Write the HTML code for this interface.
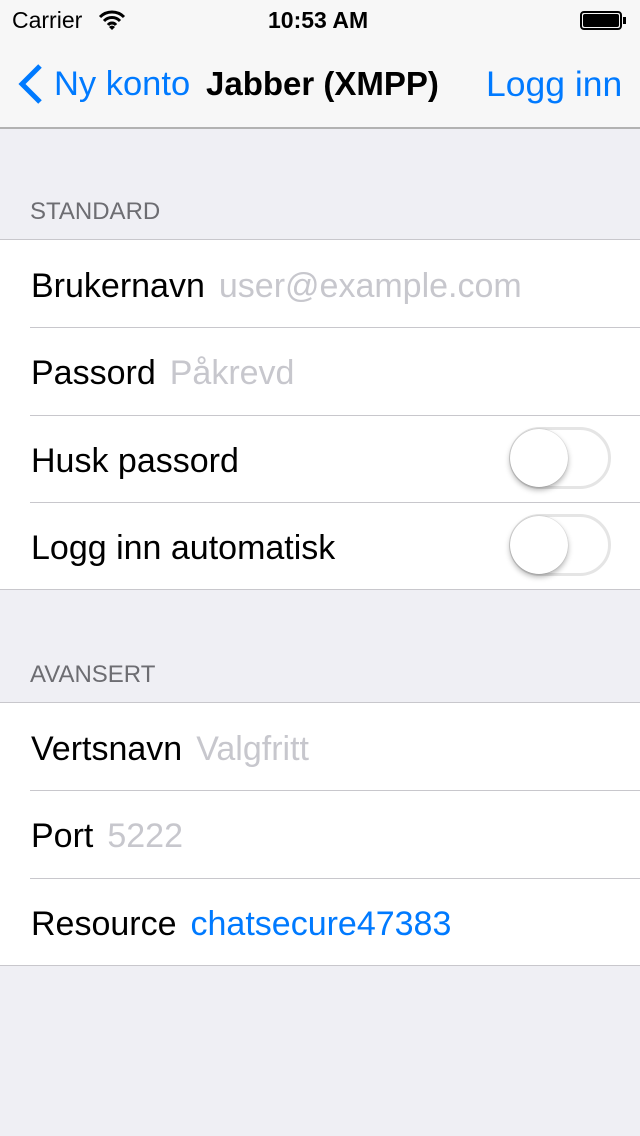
<!DOCTYPE html>
<html><head><meta charset="utf-8"><style>
*{margin:0;padding:0;box-sizing:border-box}
body{width:640px;height:1136px;background:#efeff4;font-family:"Liberation Sans",sans-serif;position:relative;overflow:hidden}
.nav{position:absolute;left:0;top:0;width:640px;height:129px;background:#f7f7f7;border-bottom:2px solid #b2b2b2}
.t{position:absolute;white-space:nowrap}
.hdr{position:absolute;left:30px;font-size:24px;color:#6d6d72}
.grp{position:absolute;left:0;width:640px;background:#fff;border-top:1px solid #c8c7cc;border-bottom:1px solid #c8c7cc}
.row{position:relative;height:87.3px;font-size:34px;line-height:92px;padding-left:31px;color:#000}
.row+.row::before{content:"";position:absolute;left:30px;right:0;top:0;border-top:1px solid #c8c7cc}
.ph{color:#c7c7cd;margin-left:14px}
.bl{color:#007aff;margin-left:14px}
.sw{position:absolute;left:509px;top:12px;width:102px;height:62px;border-radius:31px;border:3px solid #e5e5e5;background:#fff}
.kn{position:absolute;left:-2px;top:-1px;width:58px;height:58px;border-radius:50%;background:#fff;box-shadow:0 3px 6px rgba(0,0,0,.3),0 0 1px rgba(0,0,0,.3)}
</style></head><body>
<div class="nav">
<div class="t" style="left:12px;top:7px;font-size:23px">Carrier</div>
<svg class="t" style="left:98px;top:10px" width="28" height="20" viewBox="0 0 28 20"><path d="M2 7a17 17 0 0 1 24 0M6 11a11 11 0 0 1 16 0M10 15a5 5 0 0 1 8 0" stroke="#000" stroke-width="3" fill="none"/><path d="M14 20l-3-3a4 4 0 0 1 6 0z" fill="#000"/></svg>
<div class="t" style="left:268px;top:7px;font-size:23px;font-weight:bold">10:53 AM</div>
<div class="t" style="left:580px;top:11px;width:42px;height:19px;border:2px solid #000;border-radius:4px;padding:1px"><div style="width:100%;height:100%;background:#000;border-radius:2px"></div></div>
<div class="t" style="left:623px;top:17px;width:3px;height:7px;background:#000"></div>
<svg class="t" style="left:15px;top:63px" width="30" height="42" viewBox="0 0 30 42"><path d="M25 3L7 21l18 18" stroke="#007aff" stroke-width="5" fill="none"/></svg>
<div class="t" style="left:54px;top:65px;font-size:34.5px;color:#007aff">Ny konto</div>
<div class="t" style="left:206px;top:65px;font-size:33px;font-weight:bold">Jabber (XMPP)</div>
<div class="t" style="left:486px;top:64px;font-size:35.5px;color:#007aff">Logg inn</div>
</div>
<div class="hdr" style="top:198px">STANDARD</div>
<div class="grp" style="top:239px">
<div class="row">Brukernavn<span class="ph">user@example.com</span></div>
<div class="row">Passord<span class="ph">Påkrevd</span></div>
<div class="row">Husk passord<div class="sw"><div class="kn"></div></div></div>
<div class="row">Logg inn automatisk<div class="sw"><div class="kn"></div></div></div>
</div>
<div class="hdr" style="top:661px">AVANSERT</div>
<div class="grp" style="top:702px">
<div class="row">Vertsnavn<span class="ph">Valgfritt</span></div>
<div class="row">Port<span class="ph">5222</span></div>
<div class="row">Resource<span class="bl">chatsecure47383</span></div>
</div>
</body></html>
